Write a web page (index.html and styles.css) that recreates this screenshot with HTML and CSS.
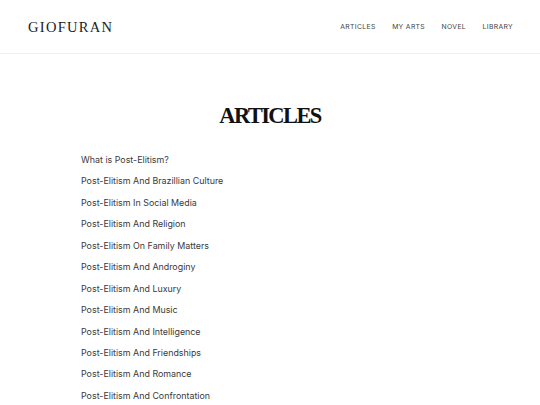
FILE: index.html
```html
<!DOCTYPE html>
<html>
<head>
<meta charset="utf-8">
<link rel="stylesheet" href="styles.css">
</head>
<body>
<header class="site-header">
  <div class="logo">GIOFURAN</div>
  <nav class="nav">
    <a href="#">ARTICLES</a>
    <a href="#">MY ARTS</a>
    <a href="#">NOVEL</a>
    <a href="#">LIBRARY</a>
  </nav>
</header>
<main class="content">
  <h1 class="title">ARTICLES</h1>
  <ul class="list">
    <li><a href="#">What is Post-Elitism?</a></li>
    <li><a href="#">Post-Elitism And Brazillian Culture</a></li>
    <li><a href="#">Post-Elitism In Social Media</a></li>
    <li><a href="#">Post-Elitism And Religion</a></li>
    <li><a href="#">Post-Elitism On Family Matters</a></li>
    <li><a href="#">Post-Elitism And Androginy</a></li>
    <li><a href="#">Post-Elitism And Luxury</a></li>
    <li><a href="#">Post-Elitism And Music</a></li>
    <li><a href="#">Post-Elitism And Intelligence</a></li>
    <li><a href="#">Post-Elitism And Friendships</a></li>
    <li><a href="#">Post-Elitism And Romance</a></li>
    <li><a href="#">Post-Elitism And Confrontation</a></li>
  </ul>
</main>
</body>
</html>
```
FILE: styles.css
```css
html, body {
  margin: 0;
  padding: 0;
  background: #ffffff;
}
body {
  font-family: Inter, "Noto Sans", sans-serif;
  color: #333;
}
.site-header {
  height: 53px;
  border-bottom: 1px solid #f0f0f0;
  display: flex;
  align-items: center;
  justify-content: space-between;
  padding: 0 27px 0 28px;
}
.logo {
  font-family: "Liberation Serif", "DejaVu Serif", serif;
  font-size: 14.5px;
  letter-spacing: 1.3px;
  color: #222;
  padding-top: 1px;
}
.nav {
  display: flex;
  gap: 16.5px;
}
.nav a {
  font-size: 6.8px;
  letter-spacing: 0.35px;
  color: #444;
  text-decoration: none;
}
.content {
  padding-top: 47px;
}
.title {
  margin: 0;
  text-align: center;
  font-family: "Liberation Serif", "DejaVu Serif", serif;
  font-weight: bold;
  font-size: 22.5px;
  line-height: 30px;
  color: #111;
  letter-spacing: -1.6px;
}
.list {
  list-style: none;
  margin: 16px 0 0 0;
  padding: 0 0 0 81px;
}
.list li {
  height: 21.45px;
  line-height: 21.45px;
}
.list a {
  font-size: 8.9px;
  color: #3a3a3a;
  text-decoration: none;
}
```
